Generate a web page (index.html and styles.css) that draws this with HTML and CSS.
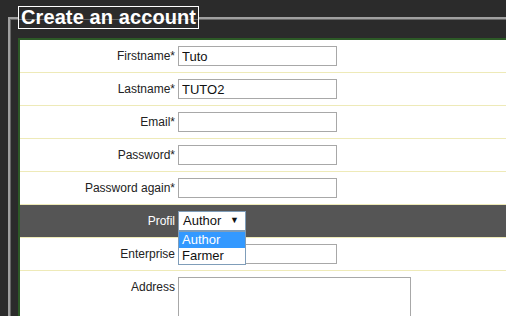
FILE: index.html
```html
<!DOCTYPE html>
<html lang="en">
<head>
    <meta charset="UTF-8">
    <title>Create an account</title>
    <link rel="stylesheet" href="styles.css">
</head>
<body>
    <fieldset class="account">
        <legend>Create an account</legend>
        <table class="form-table">
            <tr>
                <td class="label">Firstname*</td>
                <td><input type="text" class="field" value="Tuto"></td>
            </tr>
            <tr>
                <td class="label">Lastname*</td>
                <td><input type="text" class="field" value="TUTO2"></td>
            </tr>
            <tr>
                <td class="label">Email*</td>
                <td><input type="text" class="field"></td>
            </tr>
            <tr>
                <td class="label">Password*</td>
                <td><input type="password" class="field"></td>
            </tr>
            <tr>
                <td class="label">Password again*</td>
                <td><input type="password" class="field"></td>
            </tr>
            <tr class="active">
                <td class="label">Profil</td>
                <td>
                    <div class="select-wrap">
                        <div class="select">Author<span class="arrow">▼</span></div>
                        <ul class="options">
                            <li class="selected">Author</li>
                            <li>Farmer</li>
                        </ul>
                    </div>
                </td>
            </tr>
            <tr>
                <td class="label">Enterprise</td>
                <td><input type="text" class="field"></td>
            </tr>
            <tr>
                <td class="label top">Address</td>
                <td><textarea class="area"></textarea></td>
            </tr>
        </table>
    </fieldset>
</body>
</html>
```

FILE: styles.css
```css
      body {
          margin: 0;
          padding: 6px 0 0 8px;
          background-color: #2b2b2b;
          font-family: 'Liberation Sans', Arial, sans-serif;
          overflow: hidden;
      }
      .account {
          width: 620px;
          margin: 0;
          padding: 9px 0 0 8px;
          border: 2px solid #a0a0a0;
          border-right: none;
          border-bottom: none;
          box-shadow: inset 1px 1px 0 #666;
      }
      .account legend {
          color: white;
          font-size: 20px;
          font-weight: bold;
          border: 1px solid white;
          padding: 0 2px;
          margin-left: 0;
          line-height: 21px;
          letter-spacing: 0.1px;
      }
      .form-table {
          border-collapse: collapse;
          background-color: white;
          width: 600px;
          border-top: 2px solid #2d5a27;
          border-left: 2px solid #2d5a27;
          font-size: 12px;
      }
      .form-table td {
          border-bottom: 1px solid #eeeab8;
          padding: 6px 0;
          height: 20px;
          vertical-align: middle;
      }
      .form-table .label {
          width: 155px;
          text-align: right;
          padding-right: 3px;
          color: #222;
      }
      .form-table .label.top {
          vertical-align: top;
          padding-top: 9px;
      }
      .active td {
          background-color: #555;
      }
      .active .label {
          color: white;
      }
      .field {
          box-sizing: border-box;
          width: 159px;
          height: 20px;
          margin: 0;
          border: 1px solid #a8a8a8;
          padding: 0 3px;
          font-family: 'Liberation Sans', Arial, sans-serif;
          font-size: 13px;
          color: #111;
          outline: none;
      }
      .area {
          box-sizing: border-box;
          display: block;
          width: 233px;
          height: 60px;
          margin: 0;
          border: 1px solid #a8a8a8;
          resize: none;
      }
      .select-wrap {
          position: relative;
          width: 68px;
      }
      .select {
          box-sizing: border-box;
          height: 20px;
          border: 1px solid #7f9db9;
          background-color: white;
          font-size: 13px;
          line-height: 18px;
          padding-left: 4px;
          color: #111;
      }
      .arrow {
          font-size: 9px;
          float: right;
          margin-right: 6px;
          line-height: 17px;
      }
      .options {
          position: absolute;
          top: 20px;
          left: 0;
          width: 68px;
          box-sizing: border-box;
          margin: 0;
          padding: 0;
          list-style: none;
          background-color: white;
          border: 1px solid #7f9db9;
          font-size: 13px;
          z-index: 10;
      }
      .options li {
          height: 16px;
          line-height: 16px;
          padding-left: 3px;
          color: #111;
      }
      .options li.selected {
          background-color: #3399ff;
          color: white;
      }
```
